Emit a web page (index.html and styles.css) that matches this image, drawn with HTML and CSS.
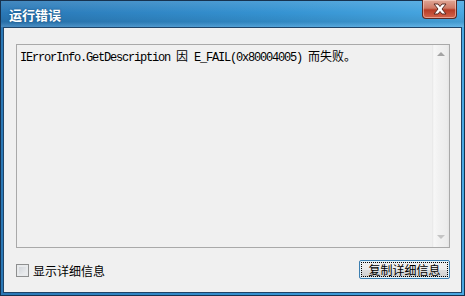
FILE: index.html
```html
<!DOCTYPE html>
<html lang="zh-CN">
<head>
    <meta charset="UTF-8">
    <title>运行错误</title>
    <link rel="stylesheet" href="styles.css">
</head>
<body>
    <div class="window">
        <div class="titlebar">
            <span class="title">运行错误</span>
            <button class="close" aria-label="关闭">
                <svg width="16" height="12" viewBox="0 0 16 12">
                    <path d="M2 1h4l2 2.5L10 1h4l-4 5 4 5h-4L8 8.5 6 11H2l4-5z" fill="#fff" stroke="#5a2a22" stroke-width="1" stroke-linejoin="round"/>
                </svg>
            </button>
        </div>
        <div class="client">
            <div class="textbox">
                <p class="message">IErrorInfo.GetDescription <span class="cjk">因</span> E_FAIL(0x80004005) <span class="cjk">而失败。</span></p>
                <div class="scrollbar">
                    <span class="arrow up"></span>
                    <span class="arrow down"></span>
                </div>
            </div>
            <div class="footer">
                <label class="check"><span class="box"></span>显示详细信息</label>
                <button class="copy">复制详细信息</button>
            </div>
        </div>
    </div>
</body>
</html>
```

FILE: styles.css
```css
body {
    margin: 0;
    font-family: "Noto Sans CJK SC", sans-serif;
    font-size: 12px;
    color: #000;
}
.window {
    width: 465px;
    height: 296px;
    box-sizing: border-box;
    border: 1px solid #17324f;
    background: linear-gradient(to right, #2a78b6, #3593d2 60%, #49a8e2);
    display: flex;
    flex-direction: column;
}
.titlebar {
    height: 26px;
    display: flex;
    justify-content: space-between;
    align-items: flex-start;
    padding-left: 8px;
    background: linear-gradient(to bottom, rgba(255,255,255,0.12), rgba(255,255,255,0) 45%, rgba(0,0,0,0.08) 80%, rgba(255,255,255,0.15));
}
.title {
    color: #fff;
    font-weight: bold;
    font-size: 13px;
    line-height: 14px;
    margin-top: 7px;
    text-shadow: 0 0 2px rgba(0, 30, 60, 0.5);
}
.close {
    width: 35px;
    height: 19px;
    margin: -1px 7px 0 0;
    padding: 0;
    border: 1px solid #5b2a24;
    border-top: none;
    border-radius: 0 0 4px 4px;
    background: linear-gradient(to bottom, #e0a796, #cf7a66 45%, #b73c26 55%, #d4654c);
    box-shadow: inset 0 0 0 1px rgba(255, 220, 210, 0.5);
    display: flex;
    align-items: center;
    justify-content: center;
}
.client {
    flex: 1;
    margin: 0 2px 2px;
    border: 1px solid #1f4468;
    background: #f0f0f0;
    padding: 16px 11px 13px 12px;
    display: flex;
    flex-direction: column;
    gap: 12px;
}
.textbox {
    height: 204px;
    box-sizing: border-box;
    border: 1px solid #a9a9a9;
    display: flex;
}
.message {
    flex: 1;
    margin: 0;
    padding: 4px 3px;
    font-family: "Liberation Mono", "Noto Sans CJK SC", monospace;
    font-size: 12px;
    line-height: 14px;
    letter-spacing: -1.2px;
}
.message .cjk {
    font-family: "Noto Sans CJK SC", sans-serif;
    letter-spacing: 0;
}
.scrollbar {
    width: 17px;
    position: relative;
    background: linear-gradient(to right, #e6e6e6, #f7f7f7 2px, #f2f2f2 6px, #ececec 15px, #e4e4e4);
}
.arrow {
    position: absolute;
    left: 5px;
    width: 0;
    height: 0;
    border-left: 4px solid transparent;
    border-right: 4px solid transparent;
}
.up {
    top: 7px;
    border-bottom: 4px solid #a3a3a3;
}
.down {
    bottom: 8px;
    border-top: 4px solid #c4c4c4;
}
.footer {
    display: flex;
    justify-content: space-between;
    align-items: center;
    height: 19px;
}
.check {
    display: flex;
    align-items: center;
    gap: 4px;
    margin-top: 2px;
}
.box {
    width: 13px;
    height: 13px;
    box-sizing: border-box;
    border: 1px solid #8e8f8f;
    background: linear-gradient(135deg, #cbcfd5, #f4f5f6);
    box-shadow: inset 0 0 0 2px #e8eaec;
}
.copy {
    width: 91px;
    height: 19px;
    padding: 0;
    border: 1px solid #3c7fb1;
    border-radius: 2px;
    background: linear-gradient(to bottom, #f2f2f2, #ebebeb 50%, #dddddd 50%, #cfcfcf);
    box-shadow: inset 0 0 0 1px #e4f4fc;
    outline: 1px dotted #000;
    outline-offset: -3px;
    font-family: "Noto Sans CJK SC", sans-serif;
    font-size: 12px;
    line-height: 15px;
    color: #000;
}
```
